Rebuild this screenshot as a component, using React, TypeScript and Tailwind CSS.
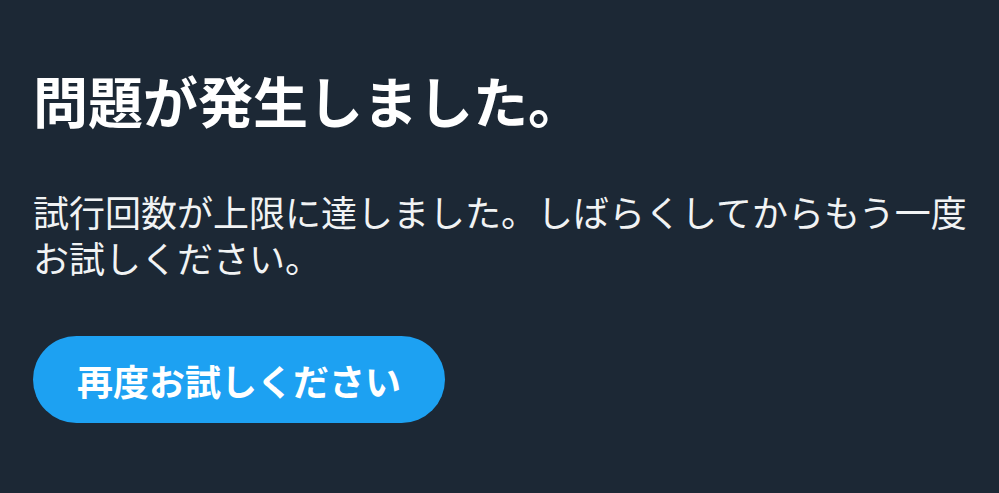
export default function App() {
  return (
    <div
      className="min-h-[493px] w-full bg-[#1c2835] pl-[33px] pr-[20px] pt-[64px] text-white"
      style={{ fontFamily: '"Noto Sans CJK JP", "Noto Sans", sans-serif' }}
    >
      <h1 className="text-[55px] font-bold leading-[70px]">問題が発生しました。</h1>
      <p className="mt-[54px] text-[36px] leading-[46px] text-[#f1f3f4]">
        試行回数が上限に達しました。しばらくしてからもう一度お試しください。
      </p>
      <button className="mt-[56px] h-[87px] rounded-full bg-[#1da1f2] px-[44px] text-[36px] font-bold text-white">
        再度お試しください
      </button>
    </div>
  );
}
